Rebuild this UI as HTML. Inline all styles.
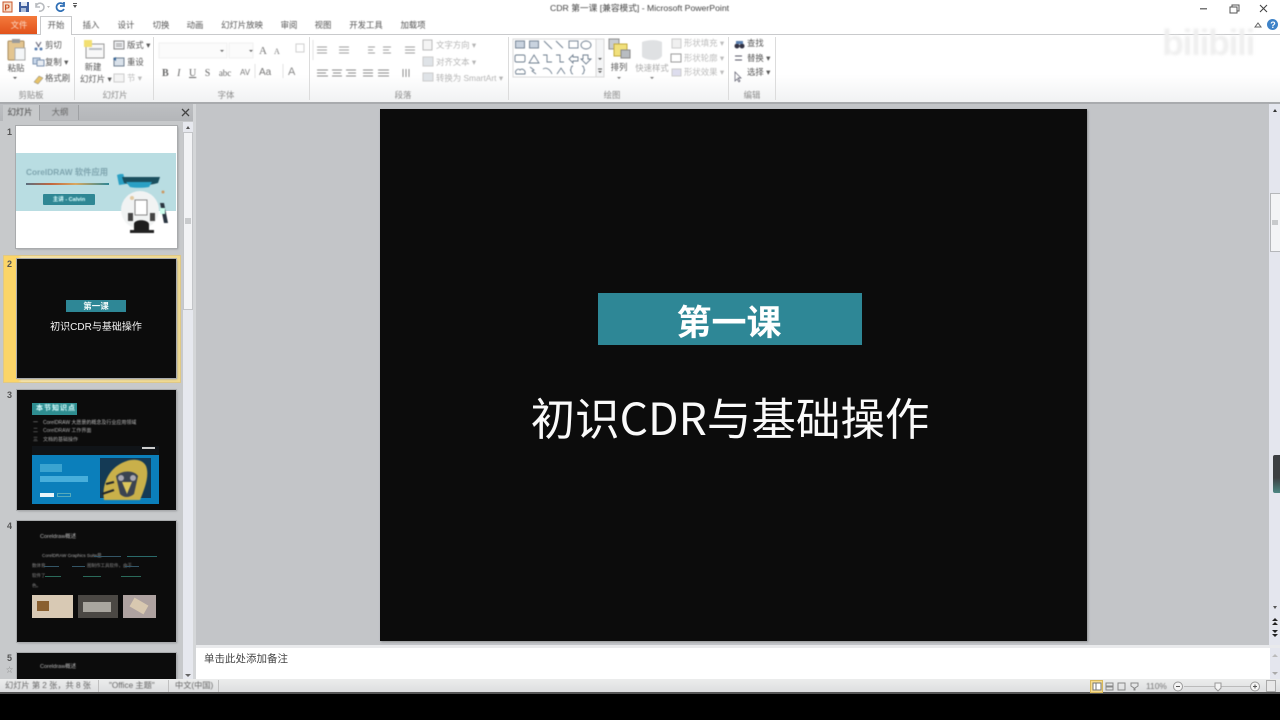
<!DOCTYPE html>
<html lang="zh"><head><meta charset="utf-8"><title>CDR 第一课</title>
<style>
html,body{margin:0;padding:0;width:1280px;height:720px;overflow:hidden;background:#000}
body{position:relative;font-family:"Liberation Sans","Noto Sans CJK SC",sans-serif;color:#444}
.a{position:absolute}
.t{position:absolute;white-space:nowrap;font-size:8.400px;line-height:12px;color:#555;filter:blur(.4px)}
.g{color:#aaa}
.c{transform:translateX(-50%)}
.sep{position:absolute;width:1px;top:37px;height:63px;background:#dcdcdc}
.thumb{position:absolute;background:#0c0c0c;box-shadow:0 0 0 1px #a9abad,1px 1px 2px #8d8f92;overflow:hidden}
.num{position:absolute;font-size:9px;font-weight:bold;color:#555;left:7px}
</style></head><body>

<!-- title bar + tabs + ribbon -->
<div class="a" style="left:0;top:0;width:1280px;height:34px;background:#fff"></div>
<div class="a" style="left:0;top:34px;width:1280px;height:68px;background:linear-gradient(#fff 0,#fff 60%,#f1f2f3 100%)"></div>
<div class="a" style="left:0;top:34px;width:1280px;height:1px;background:#c9cacc"></div>
<div class="a" style="left:0;top:102px;width:1280px;height:2px;background:#a9abae"></div>

<!-- quick access icons -->
<svg class="a" style="left:0;top:0;filter:blur(.3px)" width="90" height="14" viewBox="0 0 90 14">
<rect x="3" y="2" width="9" height="10" fill="#f6dcc8" stroke="#c8562a"/><text x="4.500" y="10.500" font-size="8" font-weight="bold" fill="#c8471a" font-family="Liberation Sans">P</text>
<rect x="19" y="2" width="10" height="10" fill="#3f5f9e"/><rect x="21" y="2" width="6" height="4" fill="#dfe6f2"/><rect x="21" y="8" width="5" height="4" fill="#a9bbd8"/>
<path d="M36 7a4 4 0 1 1 3 4M36 3v4h4" fill="none" stroke="#b9bcc0" stroke-width="1.600"/>
<path d="M47 6h3l-1.500 2z" fill="#bbb"/>
<path d="M63 4a4 4 0 1 0 1 5M64 2v4h-4" fill="none" stroke="#2f6fb5" stroke-width="1.800"/>
<path d="M73 5h4l-2 3z" fill="#555"/><rect x="73" y="3" width="4" height="1" fill="#555"/>
</svg>

<div class="t" style="left:550px;top:2px;font-size:8.700px;color:#444">CDR 第一课 [兼容模式] - Microsoft PowerPoint</div>

<!-- window controls -->
<svg class="a" style="left:1190px;top:0" width="90" height="34" viewBox="0 0 90 34">
<rect x="10" y="8" width="7" height="1.500" fill="#777"/>
<rect x="40" y="7" width="7" height="6" fill="none" stroke="#555"/><path d="M42 7V5h7v6h-2" fill="none" stroke="#555"/>
<path d="M70 5l7 7M77 5l-7 7" stroke="#444" stroke-width="1.100"/>
<path d="M65 27l3-4 3 4z" fill="none" stroke="#666"/>
<circle cx="82.500" cy="24.500" r="5.500" fill="#3f83c8"/><text x="80.300" y="28" font-size="9" font-weight="bold" fill="#fff" font-family="Liberation Sans">?</text>
</svg>

<!-- tabs -->
<div class="a" style="left:0;top:16px;width:37px;height:18px;background:linear-gradient(#f47a3c,#e1521b)"></div>
<div class="t c" style="left:19px;top:19px;color:#fbd9c5">文件</div>
<div class="a" style="left:40px;top:16px;width:32px;height:19px;background:#fff;border:1px solid #c9cacc;border-bottom:none;box-sizing:border-box"></div>
<div class="t c" style="left:56px;top:19px">开始</div>
<div class="t c" style="left:91px;top:19px">插入</div>
<div class="t c" style="left:126px;top:19px">设计</div>
<div class="t c" style="left:161px;top:19px">切换</div>
<div class="t c" style="left:195px;top:19px">动画</div>
<div class="t c" style="left:242px;top:19px">幻灯片放映</div>
<div class="t c" style="left:289px;top:19px">审阅</div>
<div class="t c" style="left:323px;top:19px">视图</div>
<div class="t c" style="left:366px;top:19px">开发工具</div>
<div class="t c" style="left:413px;top:19px">加载项</div>

<!-- group separators -->
<div class="sep" style="left:74px"></div><div class="sep" style="left:153px"></div><div class="sep" style="left:309px"></div>
<div class="sep" style="left:508px"></div><div class="sep" style="left:728px"></div><div class="sep" style="left:775px"></div>

<!-- group labels -->
<div class="t c g" style="left:31px;top:89px;color:#8a8a8a">剪贴板</div>
<div class="t c g" style="left:115px;top:89px;color:#8a8a8a">幻灯片</div>
<div class="t c g" style="left:226px;top:89px;color:#8a8a8a">字体</div>
<div class="t c g" style="left:403px;top:89px;color:#8a8a8a">段落</div>
<div class="t c g" style="left:612px;top:89px;color:#8a8a8a">绘图</div>
<div class="t c g" style="left:752px;top:89px;color:#8a8a8a">编辑</div>

<!-- clipboard -->
<div class="t c" style="left:16px;top:62px">粘贴</div>
<div class="t" style="left:45px;top:39px">剪切</div>
<div class="t" style="left:45px;top:56px">复制 ▾</div>
<div class="t" style="left:45px;top:72px">格式刷</div>
<!-- slides -->
<div class="t c" style="left:93px;top:61px">新建</div>
<div class="t" style="left:80px;top:73px">幻灯片 ▾</div>
<div class="t" style="left:127px;top:39px">版式 ▾</div>
<div class="t" style="left:127px;top:56px">重设</div>
<div class="t g" style="left:127px;top:72px;color:#bbb">节 ▾</div>
<!-- font -->
<div class="t" style="left:162px;top:67px;font-family:'Liberation Serif',serif;font-size:10px;word-spacing:6px;color:#666"><b>B</b> <i>I</i> <u>U</u> <span>S</span> <span style="font-size:9px">abc</span></div>
<div class="t" style="left:240px;top:67px;font-size:8px;color:#777">AV</div>
<div class="t" style="left:259px;top:67px;font-size:10px;color:#777">Aa</div>
<div class="t" style="left:288px;top:66px;font-size:11px;color:#888">A</div>
<div class="t" style="left:259px;top:45px;font-family:'Liberation Serif',serif;font-size:11px;color:#777">A</div>
<div class="t" style="left:274px;top:46px;font-family:'Liberation Serif',serif;font-size:8px;color:#777">A</div>
<!-- paragraph -->
<div class="t g" style="left:436px;top:39px;color:#b5b5b5">文字方向 ▾</div>
<div class="t g" style="left:436px;top:56px;color:#b5b5b5">对齐文本 ▾</div>
<div class="t g" style="left:436px;top:72px;color:#b5b5b5">转换为 SmartArt ▾</div>
<!-- drawing -->
<div class="t c" style="left:619px;top:61px">排列</div>
<div class="t c g" style="left:652px;top:62px;color:#aaa">快速样式</div>
<div class="t g" style="left:684px;top:37px;color:#bbb">形状填充 ▾</div>
<div class="t g" style="left:684px;top:52px;color:#bbb">形状轮廓 ▾</div>
<div class="t g" style="left:684px;top:66px;color:#bbb">形状效果 ▾</div>
<!-- editing -->
<div class="t" style="left:747px;top:37px">查找</div>
<div class="t" style="left:747px;top:52px">替换 ▾</div>
<div class="t" style="left:747px;top:66px">选择 ▾</div>

<!-- ribbon icons -->
<svg class="a" style="left:0;top:34px;filter:blur(.4px)" width="800" height="68" viewBox="0 34 800 68">
<!-- paste -->
<rect x="8" y="41" width="16" height="19" rx="1" fill="#e3c590" stroke="#a98d5f"/><rect x="12" y="39" width="8" height="4" fill="#9a9a9a"/><rect x="15" y="48" width="10" height="12" fill="#f4f6f8" stroke="#aaa"/>
<path d="M13 77h4l-2 2z" fill="#555"/>
<path d="M36 42l3 5M41 42l-3 5" stroke="#667" stroke-width="1.100"/><circle cx="36" cy="49" r="1.500" fill="#5a7fb0"/><circle cx="41" cy="49" r="1.500" fill="#5a7fb0"/>
<rect x="33" y="58" width="7" height="6" fill="#c7d7ea" stroke="#7d93b0"/><rect x="37" y="60" width="7" height="6" fill="#e8edf3" stroke="#7d93b0"/>
<path d="M34 82l5-6 4 2-5 6z" fill="#e6c268" stroke="#777" stroke-width=".5"/>
<!-- new slide -->
<rect x="86" y="44" width="18" height="14" fill="#f8f8f8" stroke="#999"/><rect x="84" y="40" width="8" height="7" fill="#f2df72"/><rect x="89" y="48" width="13" height="2" fill="#b9bdc4"/>
<rect x="114" y="41" width="10" height="8" fill="#eef0f3" stroke="#888"/><path d="M116 44h6M116 46h6" stroke="#999"/>
<rect x="114" y="58" width="10" height="8" fill="#d9e1ea" stroke="#6f7f90"/><path d="M113 59l3-2v4z" fill="#35669a"/>
<rect x="114" y="74" width="10" height="8" fill="#f4f4f4" stroke="#ccc"/>
<!-- font controls -->
<rect x="159" y="43" width="68" height="15" fill="#fbfbfb" stroke="#f0f0f0"/><rect x="229" y="43" width="24" height="15" fill="#fbfbfb" stroke="#f0f0f0"/>
<path d="M220 50h4l-2 2zM249 50h4l-2 2z" fill="#666"/>
<path d="M296 44h8v8h-8z" fill="none" stroke="#d0d0d0"/>
<path d="M313 40v20M255 64v14M283 64v14" stroke="#e2e2e2"/>
<!-- paragraph -->
<g stroke="#a0a0a0" fill="none"><path d="M317 47h10M317 50h10M317 53h10M339 47h10M339 50h10M339 53h10M368 47h7M368 50h5M368 53h7M383 47h8M383 50h6M383 53h8M405 47h10M405 50h10M405 53h10"/></g>
<g stroke="#8d8d8d"><path d="M317 70h11M317 73h9M317 76h11M332 70h10M333 73h8M332 76h10M346 70h10M348 73h8M346 76h10M363 70h10M363 73h10M363 76h10M378 70h11M378 73h11M378 76h11M403 69v8M406 69v8M409 69v8"/></g>
<rect x="423" y="40" width="9" height="10" fill="#f4f4f4" stroke="#bbb"/>
<rect x="423" y="57" width="10" height="9" fill="#dfe3e7" stroke="#ccc"/>
<rect x="423" y="73" width="10" height="8" fill="#dfe3e7" stroke="#ccc"/>
<!-- shape gallery -->
<rect x="513" y="39" width="91" height="38" fill="#fff" stroke="#d9d9d9"/>
<g fill="none" stroke="#6d7d8e" stroke-width=".9">
<rect x="515.500" y="41" width="9" height="7" fill="#c9d3df"/><rect x="529.500" y="41" width="9" height="7" fill="#c9d3df"/>
<path d="M544 41l8 8M556 41l7 7"/><rect x="569" y="41" width="9" height="7"/><ellipse cx="586" cy="45" rx="5" ry="4"/>
<rect x="515" y="55" width="10" height="7" rx="1.500"/><path d="M529 63l5-8 5 8z"/><path d="M543 55h4v7h5M556 55h4v7h4"/><path d="M569 59l4-4v2h5v4h-5v2z"/><path d="M583 55h5v4h3l-5 5-5-5h2z"/>
<path d="M516 74c-2-4 3-6 4-4 2-2 6 0 5 4z"/><path d="M530 67l4 3-2 1 4 3"/><path d="M543 69c3-2 7 0 9 5M557 74l4-6 4 6"/><path d="M573 66c-3 0-1 4-3 4 2 0 0 4 3 4M582 66c3 0 1 4 3 4-2 0 0 4-3 4"/>
</g>
<rect x="596" y="39" width="8" height="38" fill="#f4f5f6" stroke="#d9d9d9"/><path d="M598 58h4l-2 2zM598 71h4l-2 2z" fill="#555"/><path d="M598 69h4" stroke="#555"/>
<!-- arrange -->
<rect x="609" y="39" width="10" height="10" fill="#c8ccd1" stroke="#8f8f8f"/><rect x="614" y="44" width="13" height="12" fill="#f1e07b" stroke="#c2aa3d"/><rect x="621" y="50" width="9" height="8" fill="#b8bcc1" stroke="#888"/>
<path d="M617 77h4l-2 2zM650 77h4l-2 2z" fill="#777"/>
<!-- quick style -->
<path d="M642 42c8-3 16-2 20 0v14c-2 3-5 4-8 4-6 0-12-2-12-4z" fill="#dfe1e3"/>
<rect x="672" y="39" width="9" height="9" fill="#f0f0f0" stroke="#ccc"/><rect x="671" y="54" width="10" height="8" fill="#fff" stroke="#999"/><rect x="672" y="69" width="9" height="7" fill="#dde" stroke="#ccc"/>
<!-- find -->
<circle cx="737" cy="46" r="2.500" fill="#334"/><circle cx="742" cy="46" r="2.500" fill="#334"/><rect x="736" y="41" width="7" height="3" fill="#5a7fb0"/>
<path d="M735 56h7M735 60h7" stroke="#556"/><path d="M735 72l0 9 2-2 2 3 1-1-2-3h3z" fill="#fff" stroke="#556" stroke-width=".7"/>
</svg>

<!-- bilibili watermark -->
<div class="t" style="left:1162px;top:19px;font-size:36px;line-height:48px;font-weight:bold;color:#efefef;letter-spacing:-1.500px;filter:blur(1.200px)">bilibili</div>

<!-- workspace -->
<div class="a" style="left:0;top:104px;width:1280px;height:541px;background:#c3c5c8"></div>
<!-- left panel -->
<div class="a" style="left:0;top:104px;width:196px;height:576px;background:#c7c9cb"></div>
<div class="a" style="left:0;top:104px;width:194px;height:17px;background:linear-gradient(#bdbfc2,#b4b6b9)"></div>
<div class="a" style="left:3px;top:105px;width:36px;height:17px;background:#c7c9cb"></div>
<div class="a" style="left:39px;top:105px;width:40px;height:15px;background:#babcbf;border-right:1px solid #9fa1a4;border-left:1px solid #9fa1a4;box-sizing:border-box"></div>
<div class="t c" style="left:20px;top:106px;color:#444">幻灯片</div>
<div class="t c" style="left:60px;top:106px;color:#666">大纲</div>
<svg class="a" style="left:180px;top:107px" width="12" height="12"><path d="M2 2l7 7M9 2l-7 7" stroke="#444" stroke-width="1.300"/></svg>
<!-- left scrollbar -->
<div class="a" style="left:183px;top:122px;width:10px;height:558px;background:#e6e8ee"></div>
<div class="a" style="left:183px;top:132px;width:10px;height:178px;background:#f2f3f5;border:1px solid #c3c5c8;box-sizing:border-box"></div>
<div class="a" style="left:185px;top:218px;width:6px;height:6px;background:#c9cbcd"></div>
<svg class="a" style="left:183px;top:122px" width="10" height="560"><path d="M3 7l2-3 2 3z" fill="#555"/><path d="M2 552h6l-3 3z" fill="#666"/></svg>
<div class="a" style="left:193px;top:104px;width:3px;height:576px;background:#d4d6d8"></div>

<!-- selection -->
<div class="a" style="left:3px;top:255px;width:178px;height:128px;background:linear-gradient(90deg,#fbd568 0,#fbd568 8%,#f5e2a5 10%,#efd98f 100%);border:1px solid #dfc887;box-sizing:border-box"></div>

<div class="num" style="top:127px">1</div>
<div class="num" style="top:259px">2</div>
<div class="num" style="top:390px">3</div>
<div class="num" style="top:521px">4</div>
<div class="num" style="top:653px">5</div>
<div class="num" style="top:665px;font-weight:normal;left:6px;color:#888;font-size:7px">☆</div>

<!-- thumb 1 -->
<div class="thumb" style="left:16px;top:126px;width:161px;height:122px;background:#fff">
 <div class="a" style="left:0;top:27px;width:160px;height:58px;background:#b9dde2"></div>
 <div class="t" style="left:10px;top:40px;font-size:8.300px;font-weight:bold;color:#7fa5af">CorelDRAW 软件应用</div>
 <div class="a" style="left:10px;top:57px;width:83px;height:2px;background:linear-gradient(90deg,#5a6f80,#c2663e 30%,#d8a860 60%,#2e8796)"></div>
 <div class="a" style="left:27px;top:68px;width:52px;height:11px;background:#2f8794;border-radius:1px"></div>
 <div class="t c" style="left:53px;top:67.500px;font-size:5.500px;color:#dff;font-weight:bold">主讲 - Calvin</div>
 <svg class="a" style="left:98px;top:48px;filter:blur(.4px)" width="62" height="62" viewBox="0 0 62 62">
  <circle cx="26" cy="36" r="19" fill="#f1f3f3"/>
  <path d="M3 1l6-2 3 11-7 1z" fill="#2aa0c4"/><path d="M8 3h38l-2 6c-10 3-24 3-34 0z" fill="#1a4f5e"/><path d="M12 8h26l-3 5c-6 1-14 1-19 0z" fill="#2aa0c4"/>
  <rect x="21" y="26" width="12" height="15" fill="#fff" stroke="#888"/>
  <path d="M14 39h5v8h-5zM36 39h5v8h-5z" fill="#444"/>
  <path d="M20 58V50c0-5 14-5 15 0v8z" fill="#1d1d1d"/><rect x="16" y="56" width="24" height="3" fill="#222"/>
  <path d="M46 29h4l4 20h-4z" fill="#2a3540"/><rect x="46" y="34" width="5" height="6" fill="#cfe"/>
  <circle cx="49" cy="18" r="1.500" fill="#c96"/><circle cx="18" cy="24" r="2" fill="#e2c9a0"/>
 </svg>
</div>

<!-- thumb 2 -->
<div class="thumb" style="left:17px;top:259px;width:159px;height:119px">
 <div class="a" style="left:49px;top:41px;width:60px;height:12px;background:#2e8796"></div>
 <div class="t c" style="left:79px;top:41px;font-size:8.500px;font-weight:bold;color:#f0f8f8;filter:blur(.2px)">第一课</div>
 <div class="t c" style="left:79px;top:63px;font-size:10px;color:#f4f4f4;filter:blur(.15px)">初识CDR与基础操作</div>
</div>

<!-- thumb 3 -->
<div class="thumb" style="left:17px;top:390px;width:159px;height:120px">
 <div class="a" style="left:15px;top:13px;width:45px;height:12px;background:#2e8d90"></div>
 <div class="t" style="left:19px;top:13px;font-size:7px;font-weight:bold;color:#dff;letter-spacing:1px">本节知识点</div>
 <div class="t" style="left:16px;top:27px;font-size:5px;color:#bbb">一　CorelDRAW 大愿景的概念及行业应用领域</div>
 <div class="t" style="left:16px;top:35px;font-size:5px;color:#aaa">二　CorelDRAW 工作界面</div>
 <div class="t" style="left:16px;top:44px;font-size:5px;color:#aaa">三　文档的基础操作</div>
 <div class="a" style="left:15px;top:56px;width:127px;height:9px;background:#101418"></div>
 <div class="a" style="left:125px;top:57px;width:13px;height:2px;background:#ccc"></div>
 <div class="a" style="left:15px;top:65px;width:127px;height:49px;background:#0b7fbb"></div>
 <div class="a" style="left:23px;top:74px;width:22px;height:8px;background:#3aa3d0"></div>
 <div class="a" style="left:23px;top:86px;width:48px;height:6px;background:#47aedb"></div>
 <div class="a" style="left:23px;top:103px;width:14px;height:4px;background:#e8f4fa"></div>
 <div class="a" style="left:40px;top:103px;width:14px;height:4px;border:1px solid #5ab;box-sizing:border-box"></div>
 <div class="a" style="left:83px;top:68px;width:51px;height:40px;background:#143a55"></div>
 <svg class="a" style="left:83px;top:64px;filter:blur(.4px)" width="52" height="46" viewBox="0 0 52 46"><path d="M4 46c-2-12 2-28 16-36 10-6 22-6 26 2 4 10-2 24-6 34z" fill="#c9b04a"/><path d="M16 22c6-6 18-6 22 0l-4 18c-5 4-10 4-14 0z" fill="#3b4350"/><path d="M22 28l5 12 5-12z" fill="#dcc65c"/><circle cx="21" cy="24" r="3" fill="#a9a7b0"/><circle cx="33" cy="24" r="3" fill="#a9a7b0"/><path d="M2 40l12-4M6 30l8-2" stroke="#22262a" stroke-width="2"/></svg>
</div>

<!-- thumb 4 -->
<div class="thumb" style="left:17px;top:521px;width:159px;height:121px">
 <div class="t" style="left:23px;top:10px;font-size:5.500px;color:#bbb">Coreldraw概述</div>
 <div class="t" style="left:25px;top:29px;font-size:4.500px;color:#aaa">CorelDRAW Graphics Suite是</div>
 <div class="a" style="left:77px;top:35px;width:27px;height:1px;background:#356"></div>
 <div class="a" style="left:110px;top:35px;width:30px;height:1px;background:#2a6a6a"></div>
 <div class="t" style="left:15px;top:39px;font-size:4.500px;color:#888">数体育</div>
 <div class="a" style="left:27px;top:45px;width:15px;height:1px;background:#356"></div>
 <div class="a" style="left:55px;top:45px;width:13px;height:1px;background:#356"></div>
 <div class="t" style="left:70px;top:39px;font-size:4.500px;color:#888">图制作工具软件，由于</div>
 <div class="a" style="left:108px;top:45px;width:14px;height:1px;background:#356"></div>
 <div class="t" style="left:15px;top:49px;font-size:4.500px;color:#888">软件了</div>
 <div class="a" style="left:28px;top:55px;width:16px;height:1px;background:#2a6a5a"></div>
 <div class="a" style="left:66px;top:55px;width:18px;height:1px;background:#2a6a5a"></div>
 <div class="a" style="left:104px;top:55px;width:20px;height:1px;background:#2a6a5a"></div>
 <div class="t" style="left:15px;top:59px;font-size:4.500px;color:#888">色。</div>
 <div class="a" style="left:15px;top:74px;width:41px;height:23px;background:#d8c9b4"></div>
 <div class="a" style="left:20px;top:80px;width:12px;height:10px;background:#8a6030"></div>
 <div class="a" style="left:61px;top:74px;width:40px;height:23px;background:#4b4844"></div>
 <div class="a" style="left:66px;top:81px;width:28px;height:10px;background:#a9a69f"></div>
 <div class="a" style="left:106px;top:74px;width:33px;height:23px;background:#aea2a0"></div>
 <div class="a" style="left:114px;top:80px;width:16px;height:10px;background:#d8c8b0;transform:rotate(30deg)"></div>
</div>

<!-- thumb 5 -->
<div class="thumb" style="left:17px;top:653px;width:159px;height:26px">
 <div class="t" style="left:23px;top:8px;font-size:5.500px;color:#bbb">Coreldraw概述</div>
</div>

<!-- main slide -->
<div class="a" style="left:380px;top:109px;width:707px;height:532px;background:#0c0c0c;box-shadow:1px 1px 2px #8f9194"></div>
<div class="a" style="left:598px;top:293px;width:264px;height:52px;background:#2e8796"></div>
<div class="a" style="left:597px;top:295px;width:264px;height:52px;line-height:52px;text-align:center;font-size:35px;font-weight:bold;color:#fff;font-family:'Noto Sans CJK SC',sans-serif">第一课</div>
<div class="a" style="left:380px;top:385px;width:700px;height:62px;line-height:62px;text-align:center;font-size:44.500px;color:#fafafa;font-weight:400;white-space:nowrap;font-family:'Noto Sans CJK SC',sans-serif">初识CDR与基础操作</div>

<!-- main scrollbar -->
<div class="a" style="left:1269px;top:104px;width:11px;height:541px;background:#e4e6ee"></div>
<div class="a" style="left:1270px;top:193px;width:10px;height:59px;background:#f3f4f6;border:1px solid #b5b7ba;border-right:none;box-sizing:border-box"></div>
<div class="a" style="left:1272px;top:220px;width:6px;height:5px;background:#c8cacc"></div>
<div class="a" style="left:1273px;top:455px;width:7px;height:38px;background:linear-gradient(#3c3f42 60%,#4c8682);border-radius:2px 0 0 2px"></div>
<svg class="a" style="left:1270px;top:104px" width="10" height="541">
<path d="M3 8l2-3 2 3z" fill="#333"/><path d="M3 502h4l-2 3z" fill="#555"/>
<path d="M2 517l3-3 3 3zM2 521h6l-3-3z" fill="#222"/><path d="M2 526h6l-3 3zM2 530h6l-3 3z" fill="#222"/>
</svg>

<!-- notes -->
<div class="a" style="left:196px;top:645px;width:1084px;height:3px;background:#e9eaec"></div>
<div class="a" style="left:196px;top:648px;width:1084px;height:31px;background:#fff"></div>
<div class="t" style="left:204px;top:652px;font-size:10.500px;line-height:15px;color:#444;filter:blur(.25px)">单击此处添加备注</div>
<div class="a" style="left:1270px;top:648px;width:10px;height:31px;background:#e4e6ee"></div>
<svg class="a" style="left:1270px;top:648px" width="10" height="31"><path d="M2 9l3-3 3 3z" fill="#bbb"/><path d="M2 24h6l-3 3z" fill="#aaa"/></svg>

<!-- status bar -->
<div class="a" style="left:0;top:679px;width:1280px;height:14px;background:linear-gradient(#eceded,#dcdddf)"></div>
<div class="a" style="left:0;top:692px;width:1280px;height:2px;background:#555"></div>
<div class="t" style="left:5px;top:680px;color:#666;font-size:8.200px">幻灯片 第 2 张，共 8 张</div>
<div class="a" style="left:98px;top:680px;width:1px;height:12px;background:#c0c0c0"></div>
<div class="t" style="left:109px;top:680px;color:#666;font-size:8.200px">"Office 主题"</div>
<div class="a" style="left:168px;top:680px;width:1px;height:12px;background:#c0c0c0"></div>
<div class="t" style="left:175px;top:680px;color:#666;font-size:8.200px">中文(中国)</div>
<div class="a" style="left:218px;top:680px;width:1px;height:12px;background:#c0c0c0"></div>
<div class="a" style="left:1090px;top:680px;width:13px;height:13px;background:#f7dc8e;border:1px solid #d9b85a;box-sizing:border-box"></div>
<svg class="a" style="left:1090px;top:680px" width="190" height="13" viewBox="0 0 190 13">
<rect x="3" y="3" width="8" height="7" fill="#fff" stroke="#777"/><path d="M6 3v7" stroke="#777"/>
<g fill="none" stroke="#888"><rect x="16" y="3" width="7" height="3"/><rect x="16" y="7" width="7" height="3"/><rect x="28" y="3" width="7" height="7"/><path d="M41 3h7v3l-3 2v2h-1V8l-3-2z"/></g>
<path d="M94 6.500h66" stroke="#bbb"/><circle cx="88" cy="6.500" r="4.500" fill="#f4f4f4" stroke="#999"/><path d="M86 6.500h4" stroke="#555"/>
<path d="M125 3h6v5l-3 3-3-3z" fill="#f4f4f4" stroke="#999"/>
<circle cx="165" cy="6.500" r="4.500" fill="#f4f4f4" stroke="#999"/><path d="M163 6.500h4M165 4.500v4" stroke="#555"/>
</svg>
<div class="a" style="left:1266px;top:680px;width:10px;height:12px;background:#e8e8e8;border:1px solid #aaa;box-sizing:border-box"></div>
<div class="t" style="left:1146px;top:680px;color:#777">110%</div>

</body></html>
